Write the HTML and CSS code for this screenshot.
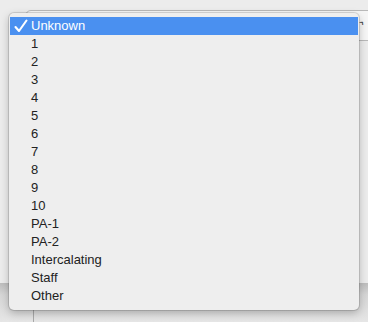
FILE: index.html
```html
<!DOCTYPE html>
<html lang="en">
<head>
    <meta charset="UTF-8">
    <title>Year select</title>
    <link rel="stylesheet" href="styles.css">
</head>
<body>
    <div class="window">
        <div class="toolbar">
            <div class="select-button">
                <span class="arrows">&#8963;</span>
            </div>
        </div>
        <div class="spacer"></div>
        <div class="footer">
            <div class="footer-cell"></div>
        </div>

        <!-- popup menu of the select -->
        <ul class="menu">
            <li class="item selected">
                <svg class="check" width="14" height="14" viewBox="0 0 14 14">
                    <path d="M1.5 8 L5 12 L12.5 1.5" fill="none" stroke="#fff" stroke-width="2.1" stroke-linecap="round" stroke-linejoin="round"/>
                </svg>Unknown</li>
            <li class="item">1</li>
            <li class="item">2</li>
            <li class="item">3</li>
            <li class="item">4</li>
            <li class="item">5</li>
            <li class="item">6</li>
            <li class="item">7</li>
            <li class="item">8</li>
            <li class="item">9</li>
            <li class="item">10</li>
            <li class="item">PA-1</li>
            <li class="item">PA-2</li>
            <li class="item">Intercalating</li>
            <li class="item">Staff</li>
            <li class="item">Other</li>
        </ul>
    </div>
</body>
</html>
```

FILE: styles.css
```css
body {
    margin: 0;
    background: #ececec;
    font-family: "Liberation Sans", Arial, sans-serif;
    font-size: 13px;
    color: #222222;
}
.window {
    position: relative;
    height: 322px;
    display: flex;
    flex-direction: column;
    overflow: hidden;
}
.toolbar {
    padding: 10px 0 0 25px;
    height: 30px;
}
.select-button {
    height: 29px;
    margin-right: -10px;
    border: 1px solid #b9b9b9;
    border-radius: 6px;
    background: #f6f6f6;
    display: flex;
    justify-content: flex-end;
    align-items: center;
    padding-right: 13px;
}
.arrows {
    font-size: 11px;
    color: #444;
    transform: rotate(40deg);
}
.spacer {
    flex: 1;
}
.footer {
    height: 39px;
    background: linear-gradient(#bdbdbd, #d6d6d6 30%, #e6e6e6);
    display: flex;
}
.footer-cell {
    margin-left: 33px;
    border-left: 1px solid #a9a9a9;
}
.menu {
    position: absolute;
    left: 9px;
    top: 13px;
    width: 350px;
    margin: 0;
    padding: 4px 0 5px;
    list-style: none;
    background: #eeeeee;
    border-radius: 5px;
    box-shadow: 0 0 0 1px rgba(0, 0, 0, 0.12), 0 3px 8px rgba(0, 0, 0, 0.25);
}
.item {
    height: 18px;
    line-height: 18px;
    padding-left: 22px;
    position: relative;
}
.selected {
    background: #4a90f0;
    color: #ffffff;
    margin: 0 1px;
    padding-left: 21px;
}
.check {
    position: absolute;
    left: 4px;
    top: 2px;
}
```
